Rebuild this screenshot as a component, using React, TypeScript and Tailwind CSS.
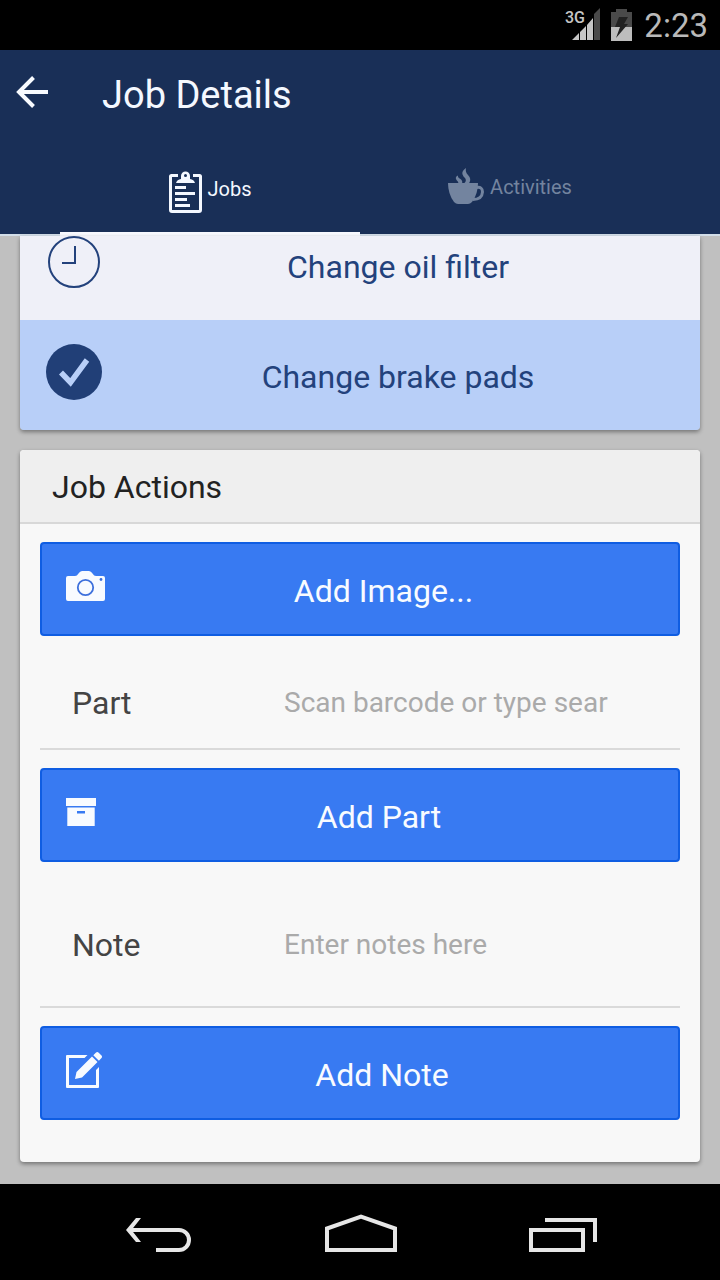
import type { ReactNode } from 'react';

function StatusBar() {
  return (
    <div className="flex h-[50px] items-center justify-end bg-black pr-3 text-[#b9b9b9]">
      <svg className="mr-[10px] h-[34px] w-9" viewBox="0 0 36 34" aria-hidden="true">
        <path d="M29 6 L35 0 V32 H29Z" fill="#4a4a4a" />
        <path d="M7 32 L14 25 V32Z M15 24 L21 18 V32 H15Z M22 17 L28 10 V32 H22Z" fill="#c6c6c6" />
        <text x="0" y="15" fontFamily="Roboto, sans-serif" fontWeight="500" fontSize="16" fill="#c6c6c6">3G</text>
      </svg>
      <svg className="mr-3 h-[32px] w-[21px]" viewBox="0 0 21 32" aria-hidden="true">
        <path d="M0 3 H5 V0 H16 V3 H21 V18 H0Z" fill="#4a4a4a" />
        <path d="M0 18 H21 V32 H0Z" fill="#bdbdbd" />
        <path d="M8 8 H17 L13 15 H17 L5 29 L9 18 H4Z" fill="#222" />
      </svg>
      <time className="pt-[2px] text-[33px] leading-[48px]">2:23</time>
    </div>
  );
}

function ClipboardIcon() {
  return (
    <svg className="h-[42px] w-[33px]" viewBox="0 0 33 42" aria-hidden="true">
      <path d="M9 4.5 H2.5 Q1.5 4.5 1.5 5.5 V39 Q1.5 40.5 3 40.5 H30 Q31.500 40.5 31.500 39 V5.500 Q31.500 4.500 30.500 4.500 H24" fill="none" stroke="currentColor" strokeWidth="3" />
      <path fillRule="evenodd" d="M7 12 Q8 8.500 12 8 V5 A4.500 4.500 0 0 1 21 5 V8 Q25 8.500 26 12Z M16.500 3 A1.500 1.500 0 1 0 16.500 6 A1.500 1.500 0 1 0 16.500 3Z" fill="currentColor" />
      <path d="M6 16.500 H17 M6 22.500 H26 M6 28.500 H18 M6 34.500 H21" stroke="currentColor" strokeWidth="3" />
    </svg>
  );
}

function CupIcon() {
  return (
    <svg className="h-9 w-9" viewBox="0 0 36 36" aria-hidden="true">
      <path d="M0 15 H30 Q30 26 24 34 Q22 36 20 36 H10 Q8 36 6 34 Q0 26 0 15Z" fill="currentColor" />
      <path d="M28.500 19.500 Q34.500 18.500 34.500 24 Q34 31.500 25 31.500" fill="none" stroke="currentColor" strokeWidth="3" />
      <path d="M18 0 Q17 4 20 7 Q24 11 21 15.500 H16 Q20 12 15.500 8.500 Q12 4 18 0Z M10 7.500 Q9.500 9.500 12.500 11 Q15 13 14 15.500 H10.500 Q10.500 13.500 8.500 12 Q6.500 9 10 7.500Z" fill="currentColor" />
    </svg>
  );
}

function CameraIcon() {
  return (
    <svg className="h-[30px] w-[39px]" viewBox="0 0 39 30" aria-hidden="true">
      <path d="M2 5 H9 Q11 5 12.500 2.500 Q14 0 16 0 H23 Q25 0 26.500 2.500 Q28 5 30 5 H37 Q39 5 39 7 V28 Q39 30 37 30 H2 Q0 30 0 28 V7 Q0 5 2 5Z" fill="#f8fbff" />
      <circle cx="19.500" cy="16.500" r="7.700" fill="none" stroke="#3d70dc" strokeWidth="1.800" />
      <circle cx="35" cy="8.500" r="1.400" fill="#3d70dc" />
    </svg>
  );
}

function BoxIcon() {
  return (
    <svg className="h-7 w-[30px]" viewBox="0 0 30 28" aria-hidden="true">
      <path d="M0 0 H30 V8 H0Z" fill="#f8fbff" />
      <path fillRule="evenodd" d="M1.300 9.500 H28.700 V28 H1.300Z M11 13 V15.500 H19 V13Z" fill="#f8fbff" />
    </svg>
  );
}

function ComposeIcon() {
  return (
    <svg className="h-9 w-9" viewBox="0 0 36 36" aria-hidden="true">
      <path fillRule="evenodd" d="M1 3 H21.500 L18.500 6 H3 V33 H30 V18 L33 15 V35 Q33 36 32 36 H1 Q0 36 0 35 V4 Q0 3 1 3Z" fill="#f8fbff" />
      <path d="M9 27 L10.500 20 L26 4.500 L31.500 10 L16 25.500Z M27.300 3.200 L29.800 0.700 Q31.300 -0.500 32.700 0.700 L35.500 3.500 Q36.500 4.700 35.500 6 L32.900 8.700Z" fill="#f8fbff" />
    </svg>
  );
}

function Tab({ icon, label, active = false }: { icon: ReactNode; label: string; active?: boolean }) {
  return (
    <button
      type="button"
      role="tab"
      aria-selected={active}
      className={
        active
          ? 'flex h-[98px] flex-1 items-center justify-center gap-[6px] border-b-4 border-[#f7f9ff] pt-[14px] text-[#f4f8ff]'
          : 'flex h-[98px] flex-1 items-center justify-center gap-[6px] border-b-2 border-[#d2dde8] text-[#73849f]'
      }
    >
      {icon}
      <span className={active ? 'pb-[6px] text-xl leading-6' : 'pt-[2px] text-xl leading-6'}>{label}</span>
    </button>
  );
}

function ActionButton({ icon, label }: { icon: ReactNode; label: string }) {
  return (
    <button
      type="button"
      className="flex h-[94px] w-full items-center gap-2 rounded border-2 border-[#0f5de2] bg-[#387af2] px-6 text-[32px] leading-10 text-[#f8fbff]"
    >
      <span className="shrink-0 pb-[6px]">{icon}</span>
      <span className="flex-1 pt-1 text-center">{label}</span>
    </button>
  );
}

export default function App() {
  return (
    <div className="flex min-h-screen flex-col bg-[#c0c0c0] font-['Roboto',sans-serif] text-black">
      <StatusBar />
      <header className="bg-[#192f57]">
        <div className="flex h-[88px] items-center px-4">
          <button type="button" aria-label="Back" className="pb-1 text-[#f8fbff]">
            <svg className="h-8 w-8" viewBox="0 0 32 32" aria-hidden="true">
              <path d="M17.500 1.500 L3 16 L17.500 30.500 M3 16 H32" fill="none" stroke="currentColor" strokeWidth="4" />
            </svg>
          </button>
          <h1 className="ml-[54px] pt-[2px] text-[38px] leading-[48px] text-[#f4f8ff]">Job Details</h1>
        </div>
        <div role="tablist" className="flex">
          <div className="w-[60px] border-b-2 border-[#d2dde8]" />
          <Tab active icon={<ClipboardIcon />} label="Jobs" />
          <Tab icon={<CupIcon />} label="Activities" />
          <div className="w-[60px] border-b-2 border-[#d2dde8]" />
        </div>
      </header>

      <main className="flex flex-1 flex-col gap-5 px-5 pb-[22px]">
        <ul className="overflow-hidden rounded-b text-[32px] leading-10 text-[#23427c] shadow-[0_2px_4px_rgba(0,0,0,0.4)]">
          <li className="flex h-[84px] items-start bg-[#eff0f8] px-7">
            <svg className="h-[52px] w-[52px] shrink-0" viewBox="0 0 52 52" aria-hidden="true">
              <circle cx="26" cy="26" r="25" fill="none" stroke="currentColor" strokeWidth="2" />
              <path d="M27 10 V27 H14" fill="none" stroke="currentColor" strokeWidth="2" />
            </svg>
            <span className="flex-1 pl-6 pt-[11px] text-center">Change oil filter</span>
          </li>
          <li className="flex h-[110px] items-center bg-[#b8cff8] px-[26px]">
            <svg className="-mt-[6px] h-14 w-14 shrink-0" viewBox="0 0 56 56" aria-hidden="true">
              <circle cx="28" cy="28" r="28" fill="#213f77" />
              <path d="M15 28.500 L24.500 38.500 L41 16" fill="none" stroke="#b8cff8" strokeWidth="5.500" />
            </svg>
            <span className="flex-1 pl-5 pt-1 text-center">Change brake pads</span>
          </li>
        </ul>

        <section className="rounded bg-[#f8f8f8] shadow-[0_2px_4px_rgba(0,0,0,0.4)]">
          <h2 className="h-[74px] rounded-t border-b-2 border-[#d8d8d8] bg-[#efefef] px-8 text-[32px] leading-[74px] text-[#222]">
            Job Actions
          </h2>
          <form className="px-5 pb-[42px] pt-[18px]">
            <ActionButton icon={<CameraIcon />} label="Add Image..." />
            <div className="mb-[18px] flex h-[114px] items-center border-b-2 border-[#dadada] pl-8 pr-[72px] pt-[22px]">
              <label htmlFor="part" className="w-[212px] shrink-0 text-[32px] leading-10 text-[#444]">Part</label>
              <input
                id="part"
                type="text"
                placeholder="Scan barcode or type search"
                className="min-w-0 flex-1 bg-transparent text-[28px] leading-10 text-[#222] outline-none placeholder:text-[#aaa]"
              />
            </div>
            <ActionButton icon={<BoxIcon />} label="Add Part" />
            <div className="mb-[18px] flex h-[146px] items-center border-b-2 border-[#dadada] pl-8 pr-[72px] pt-[22px]">
              <label htmlFor="note" className="w-[212px] shrink-0 text-[32px] leading-10 text-[#444]">Note</label>
              <input
                id="note"
                type="text"
                placeholder="Enter notes here"
                className="min-w-0 flex-1 bg-transparent text-[28px] leading-10 text-[#222] outline-none placeholder:text-[#aaa]"
              />
            </div>
            <ActionButton icon={<ComposeIcon />} label="Add Note" />
          </form>
        </section>
      </main>

      <nav className="flex h-24 items-center justify-center gap-[132px] bg-black pl-[2px] pt-[2px] text-[#e6e6e6]">
        <button type="button" aria-label="Back">
          <svg className="h-[38px] w-[68px]" viewBox="0 0 68 38" aria-hidden="true">
            <path d="M4 16 H54 A10 10 0 0 1 54 36 H31" fill="none" stroke="currentColor" strokeWidth="4" />
            <path d="M11 4 H16 L6.500 16 L16 28 H11 L1 16Z" fill="currentColor" />
          </svg>
        </button>
        <button type="button" aria-label="Home">
          <svg className="h-[38px] w-[72px]" viewBox="0 0 72 38" aria-hidden="true">
            <path d="M2 36 V14.500 L36 2.500 L70 14.500 V36Z" fill="none" stroke="currentColor" strokeWidth="4" />
          </svg>
        </button>
        <button type="button" aria-label="Recent apps">
          <svg className="h-[38px] w-[68px]" viewBox="0 0 68 38" aria-hidden="true">
            <path d="M2 16 H54 V36 H2Z M16 6 H66 V28" fill="none" stroke="currentColor" strokeWidth="4" />
          </svg>
        </button>
      </nav>
    </div>
  );
}
